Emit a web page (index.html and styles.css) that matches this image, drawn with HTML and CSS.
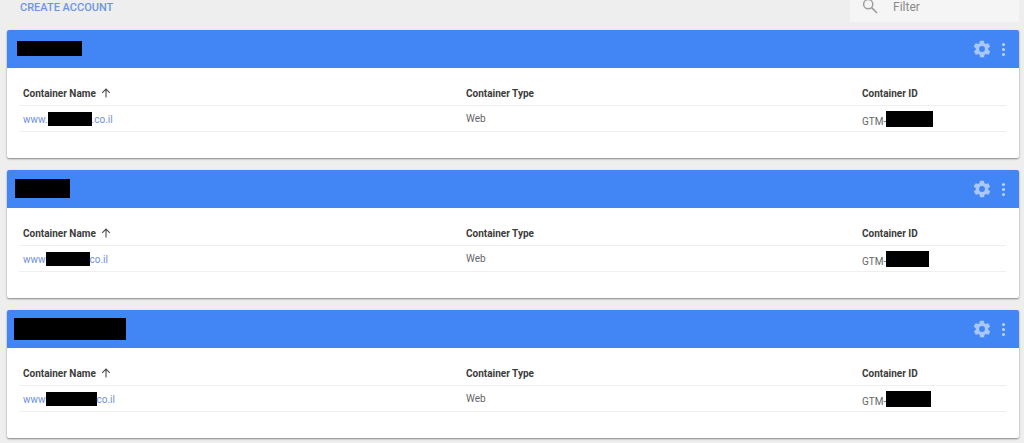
FILE: index.html
```html
<!DOCTYPE html>
<html lang="en">
<head>
<meta charset="utf-8">
<title>Accounts</title>
<link rel="stylesheet" href="styles.css">
</head>
<body>
<div class="topbar">
  <a class="create">CREATE ACCOUNT</a>
  <div class="filter">
    <svg class="search" viewBox="0 0 16 16" width="16" height="16"><circle cx="6.2" cy="5.2" r="4.6" fill="none" stroke="#9e9e9e" stroke-width="1.5"/><path d="M9.6 8.6 15 14" fill="none" stroke="#9e9e9e" stroke-width="1.7"/></svg>
    <span class="filter-text">Filter</span>
  </div>
</div>

<section class="card">
  <header class="head">
    <span class="black t1"></span>
    <div class="actions">
      <svg class="gear" viewBox="0 0 24 24" width="20" height="20"><path fill="#a9c8f9" d="M19.4 13a7.5 7.5 0 0 0 0-2l2.1-1.6a.5.5 0 0 0 .1-.6l-2-3.5a.5.5 0 0 0-.6-.2l-2.5 1a7.3 7.3 0 0 0-1.7-1l-.4-2.7a.5.5 0 0 0-.5-.4h-4a.5.5 0 0 0-.5.4l-.4 2.7a7.3 7.3 0 0 0-1.7 1l-2.5-1a.5.5 0 0 0-.6.2l-2 3.5a.5.5 0 0 0 .1.6L4.6 11a7.5 7.5 0 0 0 0 2l-2.1 1.6a.5.5 0 0 0-.1.6l2 3.5c.1.2.4.3.6.2l2.5-1c.5.4 1.1.7 1.7 1l.4 2.7c0 .2.2.4.5.4h4c.3 0 .5-.2.5-.4l.4-2.7c.6-.3 1.2-.6 1.7-1l2.5 1c.2.1.5 0 .6-.2l2-3.5a.5.5 0 0 0-.1-.6zM12 15.5a3.5 3.5 0 1 1 0-7 3.5 3.5 0 0 1 0 7z"/></svg>
      <span class="dots"><i></i><i></i><i></i></span>
    </div>
  </header>
  <div class="table">
    <div class="row th">
      <div class="name">Container Name <svg class="arrow" viewBox="0 0 10 10" width="10" height="10"><path d="M5 9.5V1M1.2 4.8 5 1l3.8 3.8" fill="none" stroke="#4a4a4a" stroke-width="1.1"/></svg></div>
      <div class="type">Container Type</div>
      <div class="id">Container ID</div>
    </div>
    <div class="row td">
      <div class="name"><a class="link">www.<span class="black n1"></span>.co.il</a></div>
      <div class="type">Web</div>
      <div class="id">GTM-<span class="black g1"></span></div>
    </div>
  </div>
</section>

<section class="card">
  <header class="head">
    <span class="black t2"></span>
    <div class="actions">
      <svg class="gear" viewBox="0 0 24 24" width="20" height="20"><path fill="#a9c8f9" d="M19.4 13a7.5 7.5 0 0 0 0-2l2.1-1.6a.5.5 0 0 0 .1-.6l-2-3.5a.5.5 0 0 0-.6-.2l-2.5 1a7.3 7.3 0 0 0-1.7-1l-.4-2.7a.5.5 0 0 0-.5-.4h-4a.5.5 0 0 0-.5.4l-.4 2.7a7.3 7.3 0 0 0-1.7 1l-2.5-1a.5.5 0 0 0-.6.2l-2 3.5a.5.5 0 0 0 .1.6L4.6 11a7.5 7.5 0 0 0 0 2l-2.1 1.6a.5.5 0 0 0-.1.6l2 3.5c.1.2.4.3.6.2l2.5-1c.5.4 1.1.7 1.7 1l.4 2.7c0 .2.2.4.5.4h4c.3 0 .5-.2.5-.4l.4-2.7c.6-.3 1.2-.6 1.7-1l2.5 1c.2.1.5 0 .6-.2l2-3.5a.5.5 0 0 0-.1-.6zM12 15.5a3.5 3.5 0 1 1 0-7 3.5 3.5 0 0 1 0 7z"/></svg>
      <span class="dots"><i></i><i></i><i></i></span>
    </div>
  </header>
  <div class="table">
    <div class="row th">
      <div class="name">Container Name <svg class="arrow" viewBox="0 0 10 10" width="10" height="10"><path d="M5 9.5V1M1.2 4.8 5 1l3.8 3.8" fill="none" stroke="#4a4a4a" stroke-width="1.1"/></svg></div>
      <div class="type">Container Type</div>
      <div class="id">Container ID</div>
    </div>
    <div class="row td">
      <div class="name"><a class="link">www<span class="black n2"></span>co.il</a></div>
      <div class="type">Web</div>
      <div class="id">GTM-<span class="black g2"></span></div>
    </div>
  </div>
</section>

<section class="card">
  <header class="head">
    <span class="black t3"></span>
    <div class="actions">
      <svg class="gear" viewBox="0 0 24 24" width="20" height="20"><path fill="#a9c8f9" d="M19.4 13a7.5 7.5 0 0 0 0-2l2.1-1.6a.5.5 0 0 0 .1-.6l-2-3.5a.5.5 0 0 0-.6-.2l-2.5 1a7.3 7.3 0 0 0-1.7-1l-.4-2.7a.5.5 0 0 0-.5-.4h-4a.5.5 0 0 0-.5.4l-.4 2.7a7.3 7.3 0 0 0-1.7 1l-2.5-1a.5.5 0 0 0-.6.2l-2 3.5a.5.5 0 0 0 .1.6L4.6 11a7.5 7.5 0 0 0 0 2l-2.1 1.6a.5.5 0 0 0-.1.6l2 3.5c.1.2.4.3.6.2l2.5-1c.5.4 1.1.7 1.7 1l.4 2.7c0 .2.2.4.5.4h4c.3 0 .5-.2.5-.4l.4-2.7c.6-.3 1.2-.6 1.7-1l2.5 1c.2.1.5 0 .6-.2l2-3.5a.5.5 0 0 0-.1-.6zM12 15.5a3.5 3.5 0 1 1 0-7 3.5 3.5 0 0 1 0 7z"/></svg>
      <span class="dots"><i></i><i></i><i></i></span>
    </div>
  </header>
  <div class="table">
    <div class="row th">
      <div class="name">Container Name <svg class="arrow" viewBox="0 0 10 10" width="10" height="10"><path d="M5 9.5V1M1.2 4.8 5 1l3.8 3.8" fill="none" stroke="#4a4a4a" stroke-width="1.1"/></svg></div>
      <div class="type">Container Type</div>
      <div class="id">Container ID</div>
    </div>
    <div class="row td">
      <div class="name"><a class="link">www<span class="black n3"></span>co.il</a></div>
      <div class="type">Web</div>
      <div class="id">GTM-<span class="black g3"></span></div>
    </div>
  </div>
</section>
</body>
</html>
```

FILE: styles.css
```css
* { box-sizing: border-box; }
html, body { height: 100%; }
body {
  margin: 0;
  padding: 0 5px 0 7px;
  background: #eeeeee;
  font-family: Roboto, "Liberation Sans", sans-serif;
  color: #616161;
  overflow: hidden;
}
.topbar {
  height: 30px;
  display: flex;
  justify-content: space-between;
  align-items: flex-start;
}
.create {
  margin: 1px 0 0 13px;
  font-size: 11px;
  line-height: 13px;
  font-weight: 500;
  color: #6f94e4;
}
.filter {
  width: 169px;
  height: 22px;
  background: #f5f5f5;
  display: flex;
  align-items: flex-start;
  padding-left: 12px;
}
.search { margin-top: -1px; }
.filter-text {
  margin-left: 15px;
  font-size: 12px;
  line-height: 14px;
  color: #8a8a8a;
}
.card {
  height: 128px;
  margin-bottom: 12px;
  background: #fff;
  border-radius: 2px;
  box-shadow: 0 1px 2px rgba(0,0,0,.45);
  overflow: hidden;
}
.head {
  height: 38px;
  background: #4285f4;
  display: flex;
  align-items: center;
  justify-content: space-between;
  padding-right: 14px;
}
.actions { display: flex; align-items: center; gap: 10px; }
.dots { display: flex; flex-direction: column; gap: 2px; }
.dots i { width: 3px; height: 3px; border-radius: 50%; background: #bcd4fb; }
.black { display: inline-block; background: #000; }
.t1 { width: 65px; height: 15px; margin-left: 10px; margin-top: -1px; }
.t2 { width: 55px; height: 19px; margin-left: 8px; margin-top: -1px; }
.t3 { width: 112px; height: 22px; margin-left: 7px; margin-top: -1px; }
.table { padding: 17px 13px 0 12px; }
.row {
  display: grid;
  grid-template-columns: 443px 396px 1fr;
  padding-left: 4px;
  border-bottom: 1px solid #efefef;
  font-size: 10px;
  align-items: center;
}
.th { height: 21px; font-weight: 700; color: #3c3c3c; padding-bottom: 4px; }
.td { height: 26px; color: #666; }
.arrow { margin-left: 3px; vertical-align: -1px; }
.link { color: #6f8fe0; }
.td .black { height: 14px; vertical-align: -3px; }
.td .id .black { height: 16px; vertical-align: -2px; }
.n1 { width: 44px; }
.n2 { width: 44px; }
.n3 { width: 51px; }
.g1 { width: 47px; }
.g2 { width: 43px; }
.g3 { width: 45px; }
```
